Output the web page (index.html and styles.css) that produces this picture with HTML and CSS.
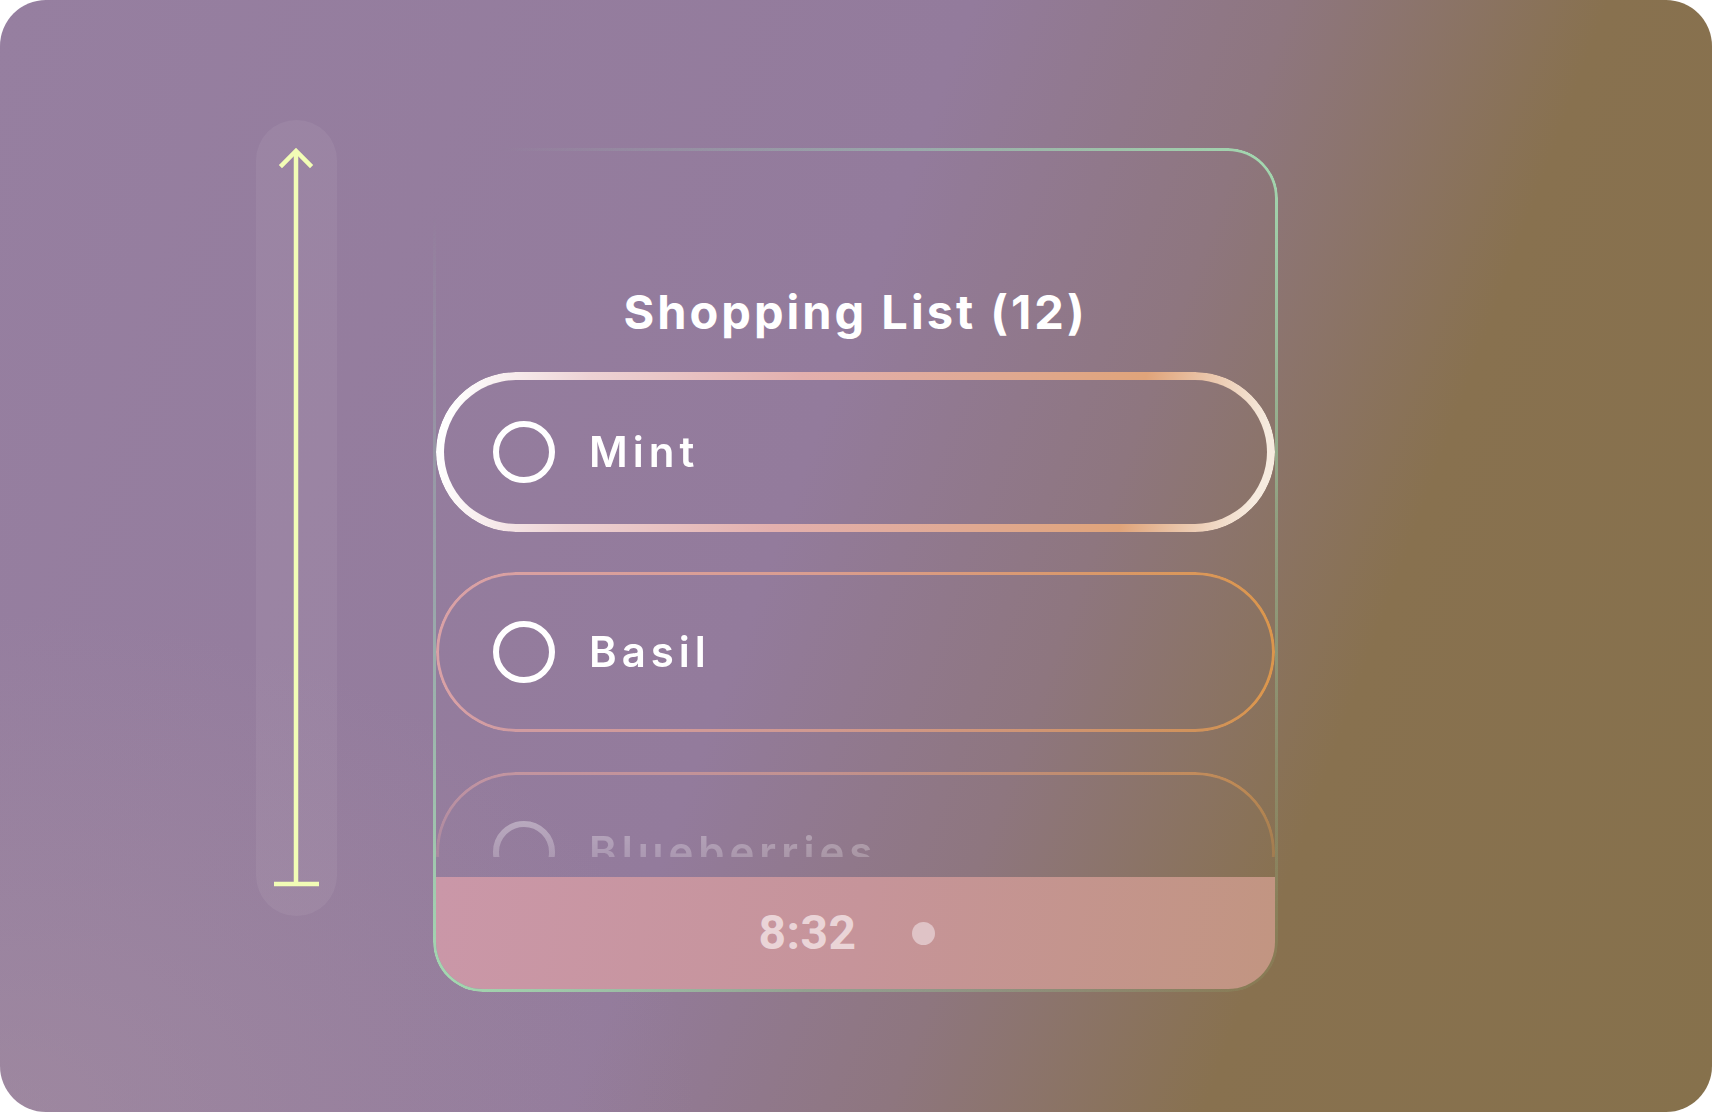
FILE: index.html
```html
<!DOCTYPE html>
<html lang="en">
<head>
<meta charset="utf-8">
<title>Shopping List</title>
<link rel="stylesheet" href="styles.css">
</head>
<body>
<div class="frame">
  <div class="scrollbar">
    <svg class="scroll-arrow" width="81" height="796" viewBox="0 0 81 796" aria-hidden="true">
      <path d="M40 31 V764" stroke="#f2fdb6" stroke-width="4.5" fill="none"/>
      <path d="M26 45 L40 31 L54 45" stroke="#f2fdb6" stroke-width="4.5" fill="none" stroke-linecap="square"/>
      <path d="M18 764 H63" stroke="#f2fdb6" stroke-width="4.5" fill="none"/>
    </svg>
  </div>
  <div class="card">
    <h1 class="title">Shopping List (12)</h1>
    <div class="list">
      <div class="item item-active">
        <span class="check"></span>
        <span class="label">Mint</span>
      </div>
      <div class="item">
        <span class="check"></span>
        <span class="label">Basil</span>
      </div>
      <div class="item item-faded">
        <span class="check"></span>
        <span class="label">Blueberries</span>
      </div>
    </div>
    <div class="footer">
      <span class="time">8:32</span>
      <span class="dot"></span>
    </div>
  </div>
</div>
</body>
</html>
```

FILE: styles.css
```css
* { box-sizing: border-box; }

html, body {
  margin: 0;
  padding: 0;
  background: #ffffff;
}

.frame {
  width: 1712px;
  height: 1112px;
  border-radius: 46px;
  overflow: hidden;
  display: flex;
  align-items: flex-start;
  gap: 96px;
  padding: 120px 0 0 256px;
  background:
    radial-gradient(ellipse 700px 500px at 0% 100%, rgba(172, 152, 162, 0.38), rgba(172, 152, 162, 0) 100%),
    linear-gradient(110deg, #967fa0 0%, #937b9c 46%, #8e767f 61%, #88714f 76%, #86714c 100%);
  font-family: "Inter", "Lato", sans-serif;
}

.scrollbar {
  flex: 0 0 81px;
  width: 81px;
  height: 796px;
  border-radius: 41px;
  background: rgba(255, 255, 255, 0.06);
}

.scroll-arrow { display: block; }

.card {
  position: relative;
  flex: 0 0 845px;
  width: 845px;
  height: 844px;
  margin-top: 28px;
  border-radius: 50px;
  padding: 3px;
  overflow: hidden;
  display: flex;
  flex-direction: column;
}

.card::after {
  content: "";
  position: absolute;
  inset: 0;
  border-radius: 50px;
  padding: 3px;
  background: linear-gradient(135deg,
    rgba(160, 215, 180, 0) 4%,
    rgba(160, 212, 185, 0.5) 28%,
    #a3d8b0 50%,
    rgba(150, 195, 150, 0.55) 72%,
    rgba(140, 170, 110, 0.15) 100%);
  -webkit-mask: linear-gradient(#000 0 0) content-box, linear-gradient(#000 0 0);
  -webkit-mask-composite: xor;
  mask-composite: exclude;
  pointer-events: none;
}

.title {
  margin: 133px 0 0;
  height: 56px;
  line-height: 56px;
  text-align: center;
  font-family: "Inter", "Lato", sans-serif;
  font-weight: 700;
  font-size: 47px;
  letter-spacing: 3px;
  color: #ffffff;
}

.list {
  margin-top: 32px;
  height: 485px;
  flex: 0 0 485px;
  overflow: hidden;
  display: flex;
  flex-direction: column;
  gap: 40px;
  -webkit-mask-image: linear-gradient(to bottom, #000 0, #000 330px, rgba(0, 0, 0, 0.3) 100%);
  mask-image: linear-gradient(to bottom, #000 0, #000 330px, rgba(0, 0, 0, 0.3) 100%);
}

.item {
  position: relative;
  flex: 0 0 160px;
  height: 160px;
  border-radius: 80px;
  display: flex;
  align-items: center;
  gap: 34px;
  padding-left: 57px;
}

.item::before {
  content: "";
  position: absolute;
  inset: 0;
  border-radius: 80px;
  padding: 3px;
  background: linear-gradient(90deg, #d9a1a6 0%, #d99d90 45%, #d99868 80%, #db964c 100%);
  -webkit-mask: linear-gradient(#000 0 0) content-box, linear-gradient(#000 0 0);
  -webkit-mask-composite: xor;
  mask-composite: exclude;
}

.item-active::before {
  padding: 8px;
  background: linear-gradient(100deg,
    #ffffff 2%,
    #edd2d4 18%,
    #e3b0ae 42%,
    #e0aa96 62%,
    #e0a47a 82%,
    #f6ebdf 97%);
}

.item-faded .check,
.item-faded .label {
  opacity: 0.75;
}

.check {
  flex: 0 0 62px;
  width: 62px;
  height: 62px;
  border: 6px solid #ffffff;
  border-radius: 50%;
}

.label {
  font-family: "Inter", "Lato", sans-serif;
  font-weight: 600;
  font-size: 42px;
  letter-spacing: 5px;
  color: #ffffff;
  line-height: 1;
}

.footer {
  margin-top: 20px;
  flex: 0 0 112px;
  height: 112px;
  border-radius: 0 0 47px 47px;
  background: linear-gradient(100deg, #ca97a8 0%, #c6949a 50%, #c29581 100%);
  display: flex;
  align-items: center;
  justify-content: center;
  gap: 55px;
  padding-right: 18px;
}

.time {
  font-family: "Roboto", sans-serif;
  font-weight: 700;
  font-size: 48px;
  letter-spacing: 0.5px;
  line-height: 1;
  color: #ead4d7;
}

.dot {
  width: 23px;
  height: 23px;
  border-radius: 50%;
  background: #dfc3c6;
}
```
